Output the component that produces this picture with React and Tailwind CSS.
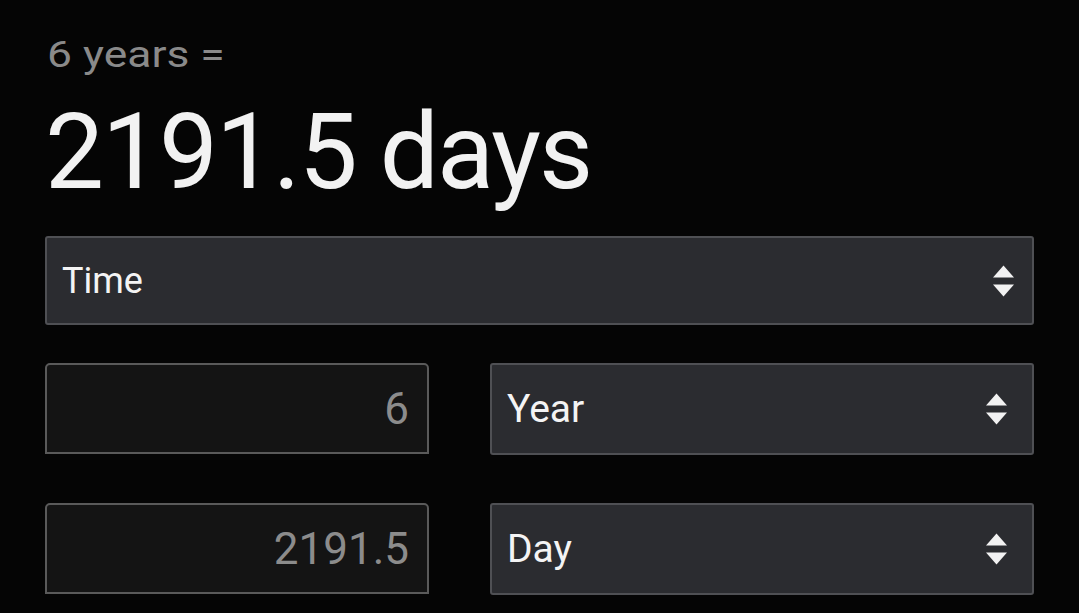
import React from "react";

// up/down spinner glyph used on every dropdown
const Arrows = () => (
  <svg width="21" height="32" viewBox="0 0 21 32" className="shrink-0">
    <path d="M10.5 0.5 L21 12.5 L0 12.5 Z" fill="#f2f2f2" />
    <path d="M0 19.5 L21 19.5 L10.5 31.5 Z" fill="#f2f2f2" />
  </svg>
);

const Select = ({ label, className = "", textClass = "text-[39px]" }) => (
  <div
    className={`flex items-center justify-between bg-[#2b2c30] border-2 border-[#4f5054] rounded-[3px] pl-[15px] ${className}`}
  >
    <span className={`${textClass} text-[#f4f4f4]`}>{label}</span>
    <Arrows />
  </div>
);

const NumberField = ({ value }) => (
  <div className="flex items-center justify-end w-[384px] h-[91px] bg-[#141414] border-2 border-[#5a5a5a] rounded-t-[5px] pr-[18px]">
    <span className="text-[44px] text-[#8c8c8c]">{value}</span>
  </div>
);

export default function App() {
  return (
    <div
      className="w-[1079px] h-[613px] bg-[#050505] overflow-hidden px-[45px] pt-[30px]"
      style={{ fontFamily: "Roboto, 'Noto Sans', sans-serif" }}
    >
      <div className="text-[37px] leading-[50px] text-[#8a8a8a] pl-[2px]">
        <span className="inline-block origin-left scale-x-[1.2]">6 years =</span>
      </div>
      <div className="mt-[13px] text-[105px] leading-[120px] tracking-[-2px] text-[#f2f2f2]">
        2191.5 days
      </div>

      <Select label="Time" textClass="text-[36px]" className="mt-[23px] h-[89px] pr-[18px]" />

      <div className="mt-[38px] flex flex-col gap-[48px]">
        <div className="flex justify-between">
          <NumberField value="6" />
          <Select label="Year" className="w-[544px] h-[92px] pr-[25px]" />
        </div>
        <div className="flex justify-between">
          <NumberField value="2191.5" />
          <Select label="Day" className="w-[544px] h-[92px] pr-[25px]" />
        </div>
      </div>
    </div>
  );
}
